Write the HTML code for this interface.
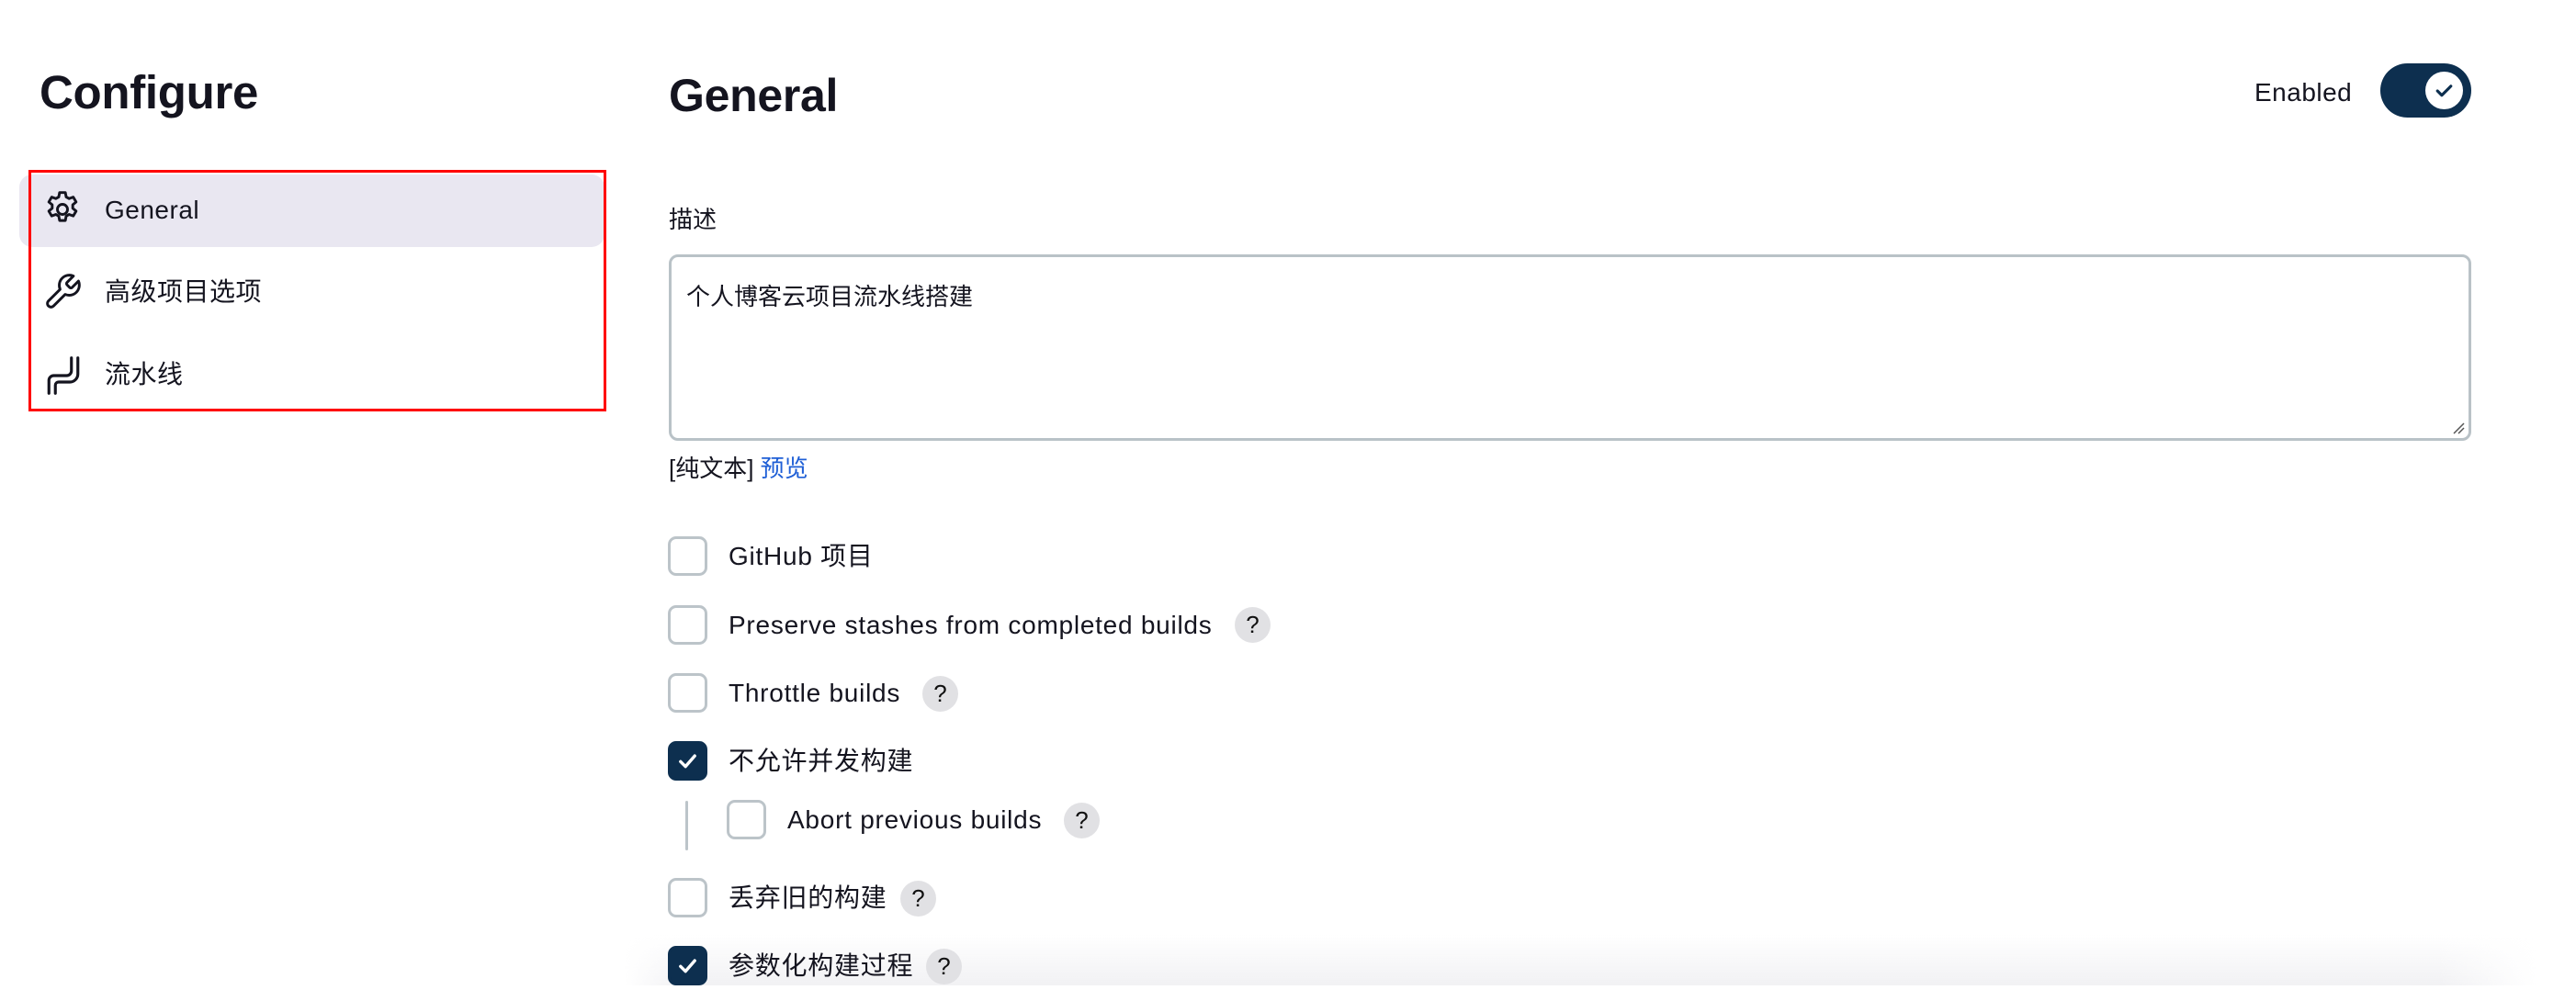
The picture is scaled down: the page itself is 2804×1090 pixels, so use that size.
<!DOCTYPE html>
<html><head><meta charset="utf-8">
<style>
*{margin:0;padding:0;box-sizing:border-box}
body{width:2804px;height:1090px;background:#fff;position:relative;overflow:hidden;font-family:"Liberation Sans","Noto Sans CJK SC",sans-serif;color:#14141f}
.a{position:absolute}
h1{position:absolute;font-size:50px;font-weight:700;line-height:1;letter-spacing:-0.3px}
.nav{font-size:28px;line-height:1;letter-spacing:.5px}
.cb{position:absolute;width:43px;height:43px;border:3px solid #bcc4c9;border-radius:9px;background:#fff}
.cb.on{background:#0d2f4f;border-color:#0d2f4f}
.lbl{position:absolute;font-size:28px;line-height:1;white-space:nowrap;letter-spacing:.75px}
.q{position:absolute;width:39px;height:39px;border-radius:50%;background:#e1e1e4;font-size:26px;text-align:center;line-height:39px;color:#111}
</style></head><body>
<h1 style="left:43px;top:75px;font-size:51px">Configure</h1>
<div class="a" style="left:21px;top:190px;width:637px;height:79px;background:#e9e7f1;border-radius:14px"></div>
<div class="a" style="left:31px;top:185px;width:629px;height:263px;border:3px solid #f00"></div>
<svg class="a" style="left:46px;top:206px" width="44" height="44" viewBox="0 0 24 24" fill="none" stroke="#14141f" stroke-width="1.6" stroke-linejoin="round"><path d="M10.3 2h3.4l.5 2.6 1.7 1 2.5-.9 1.7 2.9-2 1.7v2l2 1.7-1.7 2.9-2.5-.9-1.7 1-.5 2.6h-3.4l-.5-2.6-1.7-1-2.5.9-1.7-2.9 2-1.7v-2l-2-1.7 1.7-2.9 2.5.9 1.7-1z"/><circle cx="12" cy="12" r="3"/></svg>
<div class="a nav" style="left:114px;top:215px">General</div>
<svg class="a" style="left:46px;top:296px" width="44" height="44" viewBox="0 0 24 24" fill="none" stroke="#14141f" stroke-width="1.6" stroke-linejoin="round" stroke-linecap="round"><path d="M14.7 6.3a1 1 0 000 1.4l1.6 1.6a1 1 0 001.4 0l3.8-3.8a6 6 0 01-7.9 7.9l-6.9 6.9a2.1 2.1 0 01-3-3l6.9-6.9a6 6 0 017.9-7.9z"/></svg>
<div class="a nav" style="left:114px;top:304px">高级项目选项</div>
<svg class="a" style="left:48px;top:386px" width="42" height="46" viewBox="0 0 24 26" fill="none" stroke="#14141f" stroke-width="1.8" stroke-linecap="round" stroke-linejoin="round"><path d="M3 24v-8a3 3 0 013-3h8a3 3 0 003-3V2"/><path d="M7 24v-5a2 2 0 012-2h7a5 5 0 005-5V2"/></svg>
<div class="a nav" style="left:114px;top:394px">流水线</div>

<h1 style="left:728px;top:79px">General</h1>
<div class="a" style="left:2454px;top:85px;font-size:28px;letter-spacing:.5px">Enabled</div>
<div class="a" style="left:2591px;top:69px;width:99px;height:59px;border-radius:30px;background:#0d2f4f"></div>
<div class="a" style="left:2640px;top:78px;width:41px;height:41px;border-radius:50%;background:#fff"></div>
<svg class="a" style="left:2648px;top:86px" width="25" height="25" viewBox="0 0 24 24" fill="none" stroke="#0d2f4f" stroke-width="3" stroke-linecap="round" stroke-linejoin="round"><path d="M5 12.5l4.5 4.5L19 7.5"/></svg>

<div class="a" style="left:728px;top:219px;font-size:26px">描述</div>
<div class="a" style="left:728px;top:277px;width:1962px;height:203px;border:3px solid #b9c2c7;border-radius:10px"></div>
<div class="a" style="left:747px;top:303px;font-size:26px">个人博客云项目流水线搭建</div>
<svg class="a" style="left:2668px;top:458px" width="16" height="16"><path d="M3 14L14 3M8 14L14 8" stroke="#555" stroke-width="1.5"/></svg>
<div class="a" style="left:728px;top:490px;font-size:26px">[纯文本] <span style="color:#1f5fd6">预览</span></div>

<div class="a" style="left:0;top:0;width:2804px;height:1073px;overflow:hidden">
<div class="a" style="left:680px;top:1018px;width:2080px;height:55px;background:linear-gradient(rgba(238,238,241,0),rgba(238,238,241,.8));-webkit-mask:linear-gradient(90deg,transparent,#000 3%,#000 95%,transparent);mask:linear-gradient(90deg,transparent,#000 3%,#000 95%,transparent)"></div>
<div class="cb" style="left:727px;top:584px"></div><div class="lbl" style="left:793px;top:592px">GitHub 项目</div>
<div class="cb" style="left:727px;top:659px"></div><div class="lbl" style="left:793px;top:667px">Preserve stashes from completed builds</div><div class="q" style="left:1344px;top:661px">?</div>
<div class="cb" style="left:727px;top:733px"></div><div class="lbl" style="left:793px;top:741px">Throttle builds</div><div class="q" style="left:1004px;top:736px">?</div>
<div class="cb on" style="left:727px;top:807px"><svg width="37" height="37" viewBox="0 0 24 24" fill="none" stroke="#fff" stroke-width="2.2" stroke-linecap="round" stroke-linejoin="round"><path d="M7 12.5l3.5 3.5L17 8.5"/></svg></div><div class="lbl" style="left:793px;top:815px">不允许并发构建</div>
<div class="a" style="left:746px;top:872px;width:3px;height:54px;background:#bcc4c9;border-radius:2px"></div>
<div class="cb" style="left:791px;top:871px"></div><div class="lbl" style="left:857px;top:879px">Abort previous builds</div><div class="q" style="left:1158px;top:874px">?</div>
<div class="cb" style="left:727px;top:956px"></div><div class="lbl" style="left:793px;top:964px">丢弃旧的构建</div><div class="q" style="left:980px;top:959px">?</div>
<div class="cb on" style="left:727px;top:1030px"><svg width="37" height="37" viewBox="0 0 24 24" fill="none" stroke="#fff" stroke-width="2.2" stroke-linecap="round" stroke-linejoin="round"><path d="M7 12.5l3.5 3.5L17 8.5"/></svg></div><div class="lbl" style="left:793px;top:1038px">参数化构建过程</div><div class="q" style="left:1008px;top:1033px">?</div>
</div>
</body></html>
